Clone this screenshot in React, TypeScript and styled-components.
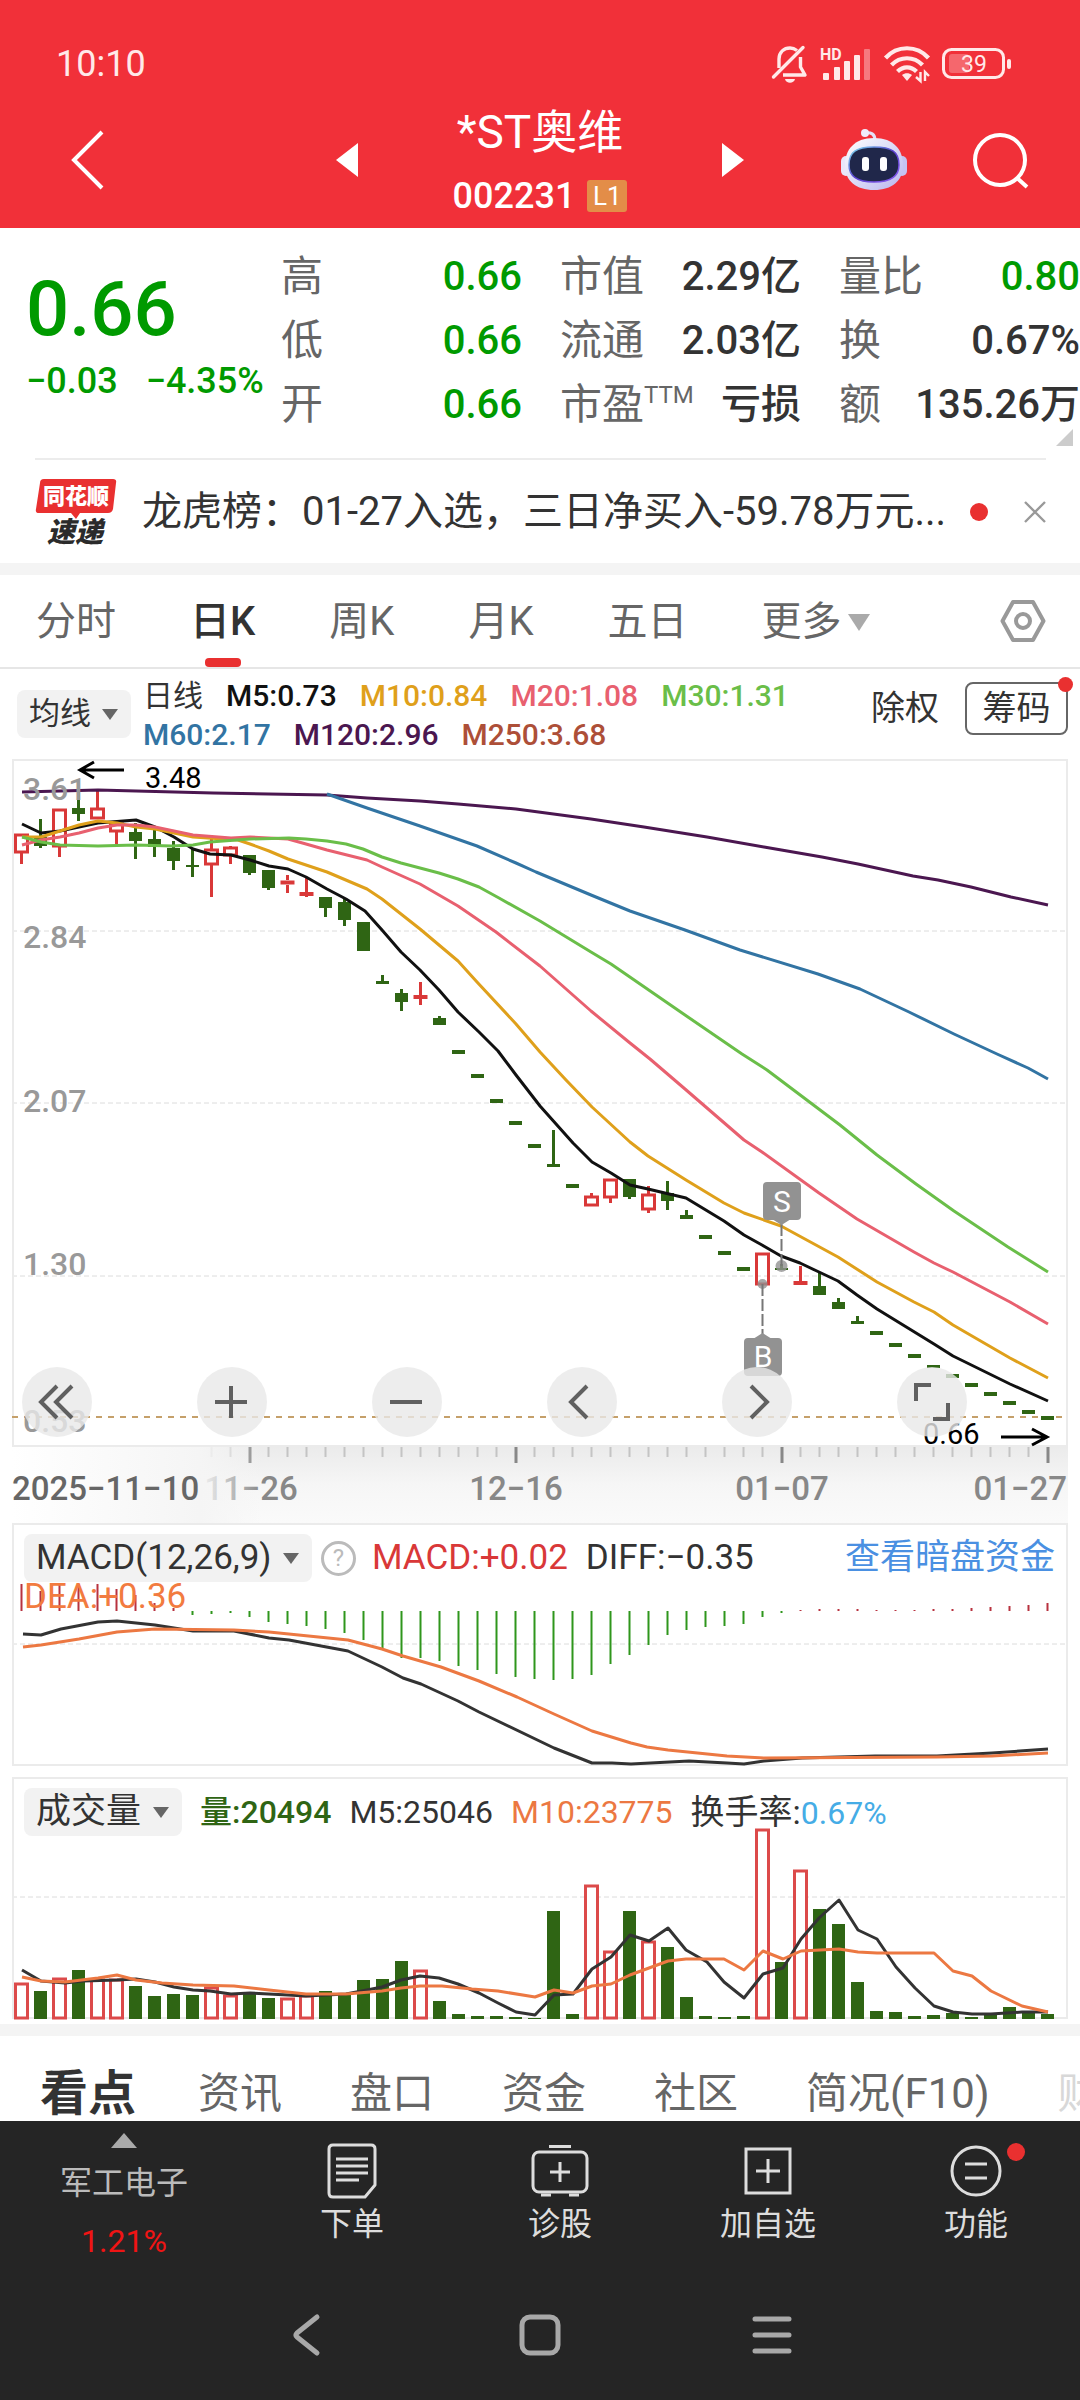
import React from "react";
import styled, { createGlobalStyle, css } from "styled-components";

const FONT = `Roboto, "Noto Sans CJK SC", "Noto Sans", sans-serif`;
const UP = "#d93838";
const DOWN = "#2f6514";

const GlobalStyle = createGlobalStyle`
  * { box-sizing: border-box; }
  html, body { margin: 0; padding: 0; background: #fff; }
  body { font-family: ${FONT}; color: #333; overflow-x: hidden; }
  button, select { font-family: inherit; color: inherit; border: 0; background: none; padding: 0; margin: 0; }
  button { cursor: pointer; }
  svg { display: block; flex: none; overflow: visible; }
  p, h1, dl, dd, dt { margin: 0; font-weight: 400; }
`;

const Page = styled.div`
  display: flex;
  flex-direction: column;
  min-height: 100vh;
`;

/* ---------- header ---------- */

const Header = styled.header`
  background: #f13039;
  color: #fff;
  height: 228px;
  display: flex;
  flex-direction: column;
`;

const StatusBar = styled.div`
  display: flex;
  align-items: center;
  justify-content: space-between;
  height: 100px;
  padding: 28px 68px 0 56px;
  color: #ffe9e9;
`;

const Clock = styled.span`
  font-size: 36px;
  line-height: 40px;
`;

const StatusIcons = styled.div`
  display: flex;
  align-items: center;
  gap: 12px;
`;

const TitleBar = styled.div`
  flex: 1;
  display: grid;
  grid-template-columns: 336px 1fr 336px;
  align-items: center;
`;

const TitleSide = styled.div<{ $end?: boolean }>`
  display: flex;
  align-items: center;
  gap: 64px;
  padding: 0 50px 8px 70px;
  justify-content: ${(p) => (p.$end ? "flex-end" : "flex-start")};
`;

const StockSwitch = styled.div`
  display: flex;
  align-items: center;
  justify-content: space-between;
  padding-bottom: 8px;
`;

const StockTitle = styled.div`
  display: flex;
  flex-direction: column;
  align-items: center;
  gap: 16px;
`;

const StockName = styled.h1`
  font-size: 46px;
  line-height: 56px;
`;

const StockCode = styled.div`
  display: flex;
  align-items: center;
  gap: 12px;
  font-size: 36px;
  font-weight: 500;
  line-height: 40px;
`;

const LevelBadge = styled.span`
  background: #e38d48;
  border-radius: 3px;
  width: 40px;
  font-size: 26px;
  font-weight: 400;
  line-height: 32px;
  text-align: center;
`;

/* ---------- quote ---------- */

const Quote = styled.section`
  position: relative;
  display: grid;
  grid-template-columns: 217px 1fr 1fr 1fr;
  column-gap: 38px;
  height: 230px;
  padding: 17px 0 0 26px;
`;

const PriceBlock = styled.div`
  color: #009a00;
  padding-top: 22px;
  white-space: nowrap;
`;

const Price = styled.p`
  font-size: 76px;
  line-height: 84px;
  font-weight: 500;
`;

const Change = styled.p`
  display: flex;
  gap: 28px;
  font-size: 36px;
  font-weight: 500;
  line-height: 44px;
  padding-top: 8px;
`;

const StatList = styled.dl`
  display: flex;
  flex-direction: column;
`;

const Stat = styled.div`
  display: flex;
  justify-content: space-between;
  align-items: center;
  height: 64px;
  line-height: 64px;
  white-space: nowrap;
`;

const StatLabel = styled.dt`
  color: #666;
  font-size: 42px;
  display: flex;
`;

const Sup = styled.span`
  font-size: 24px;
  line-height: 44px;
`;

const StatValue = styled.dd<{ $down?: boolean }>`
  font-size: 40px;
  font-weight: 500;
  color: ${(p) => (p.$down ? "#009a00" : "#333")};
`;

const Corner = styled.span`
  position: absolute;
  right: 7px;
  bottom: 12px;
  border-left: 17px solid transparent;
  border-bottom: 17px solid #ccc;
`;

const News = styled.section`
  display: flex;
  align-items: center;
  height: 105px;
  margin: 0 34px 0 35px;
  border-top: 2px solid #ececec;
`;

const NewsText = styled.a`
  flex: 1;
  min-width: 0;
  margin-left: 25px;
  color: #333;
  font-size: 40px;
  line-height: 60px;
  text-decoration: none;
  white-space: nowrap;
  overflow: hidden;
`;

const Dot = styled.span<{ $size: number }>`
  flex: none;
  width: ${(p) => p.$size}px;
  height: ${(p) => p.$size}px;
  border-radius: 50%;
  background: #e93030;
`;

const CloseButton = styled.button`
  margin-left: 36px;
`;

const Strip = styled.div`
  height: 12px;
  background: #f4f4f4;
`;

/* ---------- period tabs ---------- */

const PeriodTabs = styled.nav`
  display: flex;
  align-items: stretch;
  gap: 74px;
  height: 94px;
  padding: 0 34px 0 36px;
  border-bottom: 2px solid #e6e6e6;
`;

const PeriodTab = styled.button<{ $active?: boolean }>`
  position: relative;
  display: flex;
  align-items: center;
  gap: 6px;
  padding-top: 2px;
  font-size: 40px;
  line-height: 60px;
  color: #666;
  white-space: nowrap;
  ${(p) =>
    p.$active &&
    css`
      color: #333;
      font-weight: 500;
      &::after {
        content: "";
        position: absolute;
        left: 50%;
        bottom: 0;
        width: 36px;
        height: 9px;
        margin-left: -18px;
        border-radius: 4px;
        background: #e93030;
      }
    `}
`;

const Settings = styled.button`
  margin-left: auto;
`;

const Caret = styled.span<{ $w: number; $h: number; $color: string }>`
  flex: none;
  border: ${(p) => p.$w}px solid transparent;
  border-top: ${(p) => p.$h}px solid ${(p) => p.$color};
  border-bottom: 0;
`;

/* ---------- indicator row ---------- */

const IndicatorBar = styled.div`
  display: flex;
  align-items: center;
  height: 90px;
  padding: 0 12px 0 17px;
`;

const SelectBox = styled.label<{ $size: number }>`
  position: relative;
  display: flex;
  align-items: center;
  flex: none;
  background: #f2f2f2;
  border-radius: 8px;
  font-size: ${(p) => p.$size}px;

  select {
    appearance: none;
    height: 48px;
    line-height: 48px;
    padding: 0 40px 0 12px;
    font-size: inherit;
    color: #333;
    outline: 0;
  }

  ${Caret} {
    position: absolute;
    right: 13px;
    pointer-events: none;
  }
`;

const Averages = styled.div`
  flex: 1;
  display: flex;
  flex-wrap: wrap;
  column-gap: 23px;
  margin-left: 12px;
  padding-top: 2px;
  max-width: 690px;
  font-size: 30px;
  font-weight: 500;
  line-height: 39px;
  white-space: nowrap;
`;

const Tone = styled.span<{ $color: string; $size?: number; $weight?: number }>`
  color: ${(p) => p.$color};
  font-size: ${(p) => (p.$size ? `${p.$size}px` : "inherit")};
  font-weight: ${(p) => p.$weight || "inherit"};
`;

const BarActions = styled.div`
  display: flex;
  align-items: center;
  gap: 26px;
  margin-left: auto;
  padding-bottom: 12px;
  font-size: 34px;
`;

const OutlineButton = styled.button`
  position: relative;
  height: 53px;
  width: 103px;
  border: 2px solid #666;
  border-radius: 8px;
  font-size: 34px;
  line-height: 48px;

  ${Dot} {
    position: absolute;
    top: -7px;
    right: -7px;
  }
`;

const TextButton = styled.button`
  font-size: 34px;
  line-height: 50px;
`;

/* ---------- charts ---------- */

const Charts = styled.main`
  padding: 0 12px;
`;

const Panel = styled.section`
  position: relative;
`;

const ChartSvg = styled.svg`
  width: 100%;
  height: auto;
  font-family: ${FONT};
`;

const ChartTools = styled.div`
  position: absolute;
  left: 10px;
  right: 101px;
  bottom: 10px;
  display: flex;
  justify-content: space-between;
`;

const ToolButton = styled.button`
  display: grid;
  place-items: center;
  width: 70px;
  height: 70px;
  border-radius: 50%;
  background: rgba(232, 232, 232, 0.8);
`;

const PanelHead = styled.div<{ $size: number }>`
  position: absolute;
  top: 11px;
  left: 12px;
  right: 13px;
  display: flex;
  align-items: center;
  gap: 18px;
  height: 48px;
  font-size: ${(p) => p.$size}px;
  line-height: 48px;
  white-space: nowrap;
`;

const HelpMark = styled.button`
  width: 35px;
  height: 35px;
  margin: 0 -2px 0 -9px;
  border: 3px solid #bbb;
  border-radius: 50%;
  color: #bbb;
  font-size: 24px;
  line-height: 29px;
`;

const PanelLink = styled.a`
  margin-left: auto;
  color: #4a90e2;
  text-decoration: none;
`;

const DeaLabel = styled.span`
  position: absolute;
  top: 54px;
  left: 12px;
  color: #f27b40;
  font-size: 35px;
  line-height: 40px;
`;

const VolumePanel = styled(Panel)`
  margin: 11px 0 5px;
`;

/* ---------- info tabs and bottom bars ---------- */

const InfoTabs = styled.nav`
  display: flex;
  align-items: center;
  gap: 68px;
  height: 85px;
  padding: 31px 0 0 40px;
  overflow: hidden;
`;

const InfoTab = styled.button<{ $active?: boolean; $faded?: boolean }>`
  flex: none;
  margin-right: ${(p) => (p.$active ? -6 : 0)}px;
  font-size: ${(p) => (p.$active ? 48 : 42)}px;
  font-weight: ${(p) => (p.$active ? 700 : 400)};
  line-height: 54px;
  color: ${(p) => (p.$active ? "#333" : p.$faded ? "#d8d8d8" : "#666")};
`;

const Dock = styled.footer`
  flex: 1;
  display: flex;
  flex-direction: column;
  background: #252525;
  color: #ddd;
`;

const DockRow = styled.div`
  display: grid;
  grid-template-columns: 248px repeat(4, 1fr);
  height: 150px;
`;

const SectorButton = styled.button`
  display: flex;
  flex-direction: column;
  align-items: center;
  padding-top: 12px;
  color: #bbb;
  font-size: 32px;
  line-height: 48px;
`;

const SectorName = styled.span`
  margin: 11px 0 10px;
`;

const DockButton = styled.button`
  display: flex;
  flex-direction: column;
  align-items: center;
  padding-top: 20px;
  font-size: 32px;
  line-height: 46px;
`;

const IconSlot = styled.span`
  position: relative;
  display: grid;
  place-items: center;
  width: 62px;
  height: 60px;

  ${Dot} {
    position: absolute;
    top: 2px;
    right: -18px;
  }
`;

const SystemNav = styled.div`
  display: flex;
  align-items: center;
  justify-content: space-between;
  height: 129px;
  padding: 0 287px 1px 286px;
`;

/* ---------- data ---------- */

type Candle = [up: number, high: number, top: number, bottom: number, low: number];

const candles: Candle[] = [
  [1, 75, 75, 93, 105], [0, 60, 78, 87, 89], [1, 50, 50, 87, 98], [0, 31, 49, 55, 62],
  [1, 31, 49, 59, 60], [1, 64, 64, 72, 85], [0, 64, 73, 82, 100], [0, 71, 80, 88, 98],
  [0, 82, 89, 102, 111], [0, 89, 106, 108, 118], [1, 80, 90, 105, 138], [1, 87, 88, 96, 105],
  [0, 96, 96, 114, 116], [0, 111, 111, 129, 131], [1, 116, 121, 126, 134], [1, 119, 133, 137, 138],
  [0, 138, 138, 149, 158], [0, 140, 143, 161, 167], [0, 163, 163, 192, 192], [0, 216, 222, 225, 225],
  [0, 230, 234, 243, 252], [1, 223, 236, 240, 246], [0, 257, 259, 266, 266], [0, 291, 291, 295, 295],
  [0, 315, 315, 319, 319], [0, 340, 340, 344, 344], [0, 362, 362, 366, 366], [0, 385, 385, 389, 389],
  [0, 371, 405, 408, 408], [0, 425, 425, 429, 429], [1, 434, 437, 446, 446], [1, 420, 420, 438, 444],
  [0, 420, 420, 438, 440], [1, 427, 435, 450, 454], [0, 422, 434, 442, 451], [0, 451, 456, 460, 460],
  [0, 476, 476, 480, 480], [0, 492, 492, 496, 496], [0, 508, 508, 512, 512], [1, 494, 494, 525, 525],
  [0, 505, 509, 511, 511], [1, 507, 522, 526, 526], [0, 514, 527, 536, 536], [0, 539, 543, 550, 550],
  [0, 557, 562, 565, 565], [0, 572, 572, 576, 576], [0, 584, 584, 588, 588], [0, 595, 595, 599, 599],
  [0, 606, 606, 609, 609], [0, 615, 615, 619, 619], [0, 624, 624, 628, 628], [0, 633, 633, 637, 637],
  [0, 642, 642, 646, 646], [0, 651, 651, 655, 655], [0, 657, 657, 661, 661],
];

const averageLines: [color: string, points: string][] = [
  ["#4b1750", "22,33 98,31 213,34 327,36 367,39 420,42 458,45 516,50 591,60 644,68 707,78 764,88 822,98 858,105 913,117 938,121 971,128 1011,138 1048,146"],
  ["#3274a3", "327,35 367,49 420,67 477,87 516,104 536,113 591,136 630,152 685,171 740,191 818,215 860,230 909,253 954,275 997,295 1028,309 1048,320"],
  ["#111", "22,65 41,74 60,72 98,64 136,61 155,68 174,78 193,90 210,95 231,96 250,101 269,107 288,110 306,118 327,130 346,140 365,152 382,171 401,193 420,211 439,231 458,253 479,273 498,292 516,316 540,347 573,384 592,403 611,414 630,426 648,430 686,439 724,462 744,476 762,486 781,497 800,504 819,513 838,522 857,536 877,550 934,585 953,597 1010,625 1048,642"],
  ["#dfa01b", "22,78 41,78 60,72 79,66 98,62 117,64 136,68 155,70 193,78 238,81 250,85 269,92 288,100 306,106 327,113 367,130 382,140 420,170 458,202 477,223 516,265 540,293 566,321 592,348 630,383 648,397 686,421 724,444 744,454 781,467 838,498 877,523 914,543 934,553 953,566 1010,599 1048,619"],
  ["#e8606f", "22,86 41,81 60,78 79,74 98,69 117,66 136,66 155,68 193,76 231,79 250,78 288,80 306,85 327,91 367,101 382,108 420,125 458,147 496,173 540,207 591,252 630,284 650,300 685,330 744,381 762,393 819,434 857,460 914,493 934,504 953,513 1010,543 1048,565"],
  ["#6abe49", "22,78 41,83 60,86 98,87 136,86 172,87 193,86 210,83 250,80 289,79 306,80 327,82 346,85 363,90 382,98 401,104 439,114 458,120 479,128 499,139 540,162 591,193 611,205 685,256 742,295 767,311 840,366 877,396 916,425 954,452 1008,488 1048,513"],
];

const macdBars = [
  27, 20, 26, 27, 27, 22, 16, 8, 3, -4, -3, -2, -6, -11, -13, -15, -18, -22, -29, -37, -47, -47, -50, -55, -59,
  -63, -66, -68, -69, -68, -64, -53, -44, -34, -24, -19, -16, -15, -13, -6, -2, 1, 2, 2, 2, 1, 1, 1, 2, 2, 3, 4,
  5, 6, 8,
];
const diffLine =
  "23,111 41,112 61,106 98,99 117,98 155,102 193,108 234,108 269,115 289,117 348,128 382,144 403,155 421,161 458,178 479,189 554,225 592,240 612,240 631,241 689,238 727,240 744,241 764,238 802,235 875,233 937,233 992,230 1048,226";
const deaLine =
  "23,124 41,122 79,116 117,109 155,106 234,107 269,109 348,117 382,126 403,133 441,144 479,158 517,174 554,191 592,208 631,220 647,224 668,227 727,233 764,235 937,234 992,233 1048,230";

const volumes = [
  34, 28, 39, 49, 38, 38, 33, 23, 25, 24, 30, 22, 25, 21, 19, 22, 28, 26, 39, 40, 58, 47, 18, 5, 3, 3, 2, 1, 108,
  5, 132, 66, 108, 76, 72, 22, 3, 2, 3, 188, 57, 147, 110, 95, 37, 8, 7, 3, 4, 6, 2, 4, 12, 7, 5,
];
const volume5 =
  "22,193 41,204 65,206 83,204 117,203 136,202 155,205 174,210 193,213 210,214 231,217 250,216 288,218 306,219 346,217 367,213 382,210 401,203 420,199 439,201 458,207 479,216 498,226 516,235 535,238 554,218 573,217 592,192 611,180 630,158 649,164 668,151 686,173 707,185 724,205 744,221 763,197 783,191 801,162 819,141 839,123 858,153 877,162 896,190 915,211 934,229 953,235 972,237 991,237 1022,235 1048,235";
const volume10 =
  "22,200 41,204 65,205 98,201 117,198 136,203 162,206 193,208 234,209 269,213 306,217 346,217 382,214 401,211 420,209 442,209 472,212 498,214 535,220 554,213 573,216 592,209 611,207 630,198 668,184 686,182 724,182 744,193 763,174 783,182 801,174 839,172 858,175 877,176 934,176 953,194 972,199 991,214 1022,229 1048,235";

const xOf = (i: number) => 22 + i * 19 - 0.5;

/* ---------- chart drawings ---------- */

function Frame({ height }: { height: number }) {
  return <rect x="13" y="1" width="1054" height={height - 2} fill="none" stroke="#ebebeb" strokeWidth="2" />;
}

function GridLine({ y }: { y: number }) {
  return <line x1="12" x2="1067" y1={y} y2={y} stroke="#dcdcdc" strokeDasharray="5 3" />;
}

function Line({ color, points }: { color: string; points: string }) {
  return <polyline points={points} fill="none" stroke={color} strokeWidth="3" strokeLinejoin="round" />;
}

function CandleMark({ candle, x }: { candle: Candle; x: number }) {
  const [up, high, top, bottom, low] = candle;
  if (!up) {
    return (
      <g fill={DOWN}>
        <rect x={x - 1.5} y={high} width="3" height={low - high} />
        <rect x={x - 6.5} y={top} width="13" height={bottom - top} />
      </g>
    );
  }
  return (
    <g stroke={UP} strokeWidth="3">
      <path d={`M${x} ${high}V${top}M${x} ${bottom}V${low}`} />
      {bottom - top > 6 ? (
        <rect x={x - 6} y={top + 1} width="12" height={bottom - top - 1} fill="none" />
      ) : (
        <path d={`M${x - 7} ${(top + bottom) / 2}H${x + 7}`} strokeWidth="4" />
      )}
    </g>
  );
}

function PriceChart() {
  return (
    <ChartSvg viewBox="12 0 1056 688" role="img" aria-label="日K">
      {[172, 344, 517].map((y) => (
        <GridLine key={y} y={y} />
      ))}
      <Frame height={688} />
      <line x1="12" x2="1065" y1="658" y2="658" stroke="#c5a06a" strokeWidth="2" strokeDasharray="6 6" />
      {candles.map((c, i) => (
        <CandleMark key={i} candle={c} x={xOf(i)} />
      ))}
      {averageLines.map(([color, points]) => (
        <Line key={color} color={color} points={points} />
      ))}
      <g fill="#999" fontSize="32" fontWeight="500">
        <text x="23" y="41">3.61</text>
        <text x="23" y="189">2.84</text>
        <text x="23" y="353">2.07</text>
        <text x="23" y="516">1.30</text>
        <text x="23" y="673">0.53</text>
      </g>
      <g fill="#000" fontSize="29">
        <text x="145" y="29">3.48</text>
        <text x="923" y="685">0.66</text>
      </g>
      <g fill="none" stroke="#000" strokeWidth="3">
        <path d="M124 11H80M94 3L80 11L94 19" />
        <path d="M1001 678H1046M1032 670L1047 678L1032 686" />
      </g>
      <g fill="#929292">
        <circle cx="781.5" cy="507" r="6" opacity="0.8" />
        <circle cx="762.5" cy="525" r="5" opacity="0.8" />
        <path d="M781.5 465V508M762.5 525V575" stroke="#777" strokeWidth="2" strokeDasharray="12 3" />
        <rect x="763" y="423" width="38" height="38" rx="4" />
        <path d="M772 460H791L781.5 466ZM753 580H772L762.5 574Z" />
        <rect x="744" y="579" width="38" height="38" rx="4" />
      </g>
      <g fill="#fff" fontSize="30" textAnchor="middle">
        <text x="782" y="453">S</text>
        <text x="763" y="608">B</text>
      </g>
    </ChartSvg>
  );
}

function TimeAxis() {
  return (
    <ChartSvg viewBox="12 0 1056 76">
      <defs>
        <linearGradient id="axisShade" x2="0" y2="1">
          <stop offset="0" stopColor="#ebebeb" />
          <stop offset="0.5" stopColor="#f6f6f6" />
          <stop offset="1" stopColor="#fafafa" />
        </linearGradient>
        <linearGradient id="axisFade">
          <stop offset="0" stopColor="#fff" />
          <stop offset="0.75" stopColor="#f5f5f5" />
          <stop offset="1" stopColor="#f5f5f5" stopOpacity="0" />
        </linearGradient>
      </defs>
      <rect x="12" width="1056" height="76" fill="url(#axisShade)" />
      {candles.map((_, i) => {
        if (i < 10) return null;
        const major = (i - 12) % 14 === 0;
        return (
          <rect
            key={i}
            x={xOf(i) - 1}
            y="0"
            width={major ? 3 : 2}
            height={major ? 16 : 10}
            fill={major ? "#888" : "#c4c4c4"}
          />
        );
      })}
      <g fill="#888" fontSize="33" fontWeight="500">
        <text x="251" y="53" textAnchor="middle">11−26</text>
        <text x="516" y="53" textAnchor="middle">12−16</text>
        <text x="782" y="53" textAnchor="middle">01−07</text>
        <text x="1067" y="53" textAnchor="end">01−27</text>
      </g>
      <rect x="12" width="250" height="76" fill="url(#axisFade)" />
      <text x="12" y="53" fill="#666" fontSize="33" fontWeight="500">2025−11−10</text>
    </ChartSvg>
  );
}

function MacdChart() {
  return (
    <ChartSvg viewBox="12 0 1056 243" role="img" aria-label="MACD">
      <GridLine y={121} />
      <Frame height={243} />
      {macdBars.map((v, i) => (
        <rect
          key={i}
          x={xOf(i) - 1}
          y={v > 0 ? 88 - v : 88}
          width="2"
          height={Math.abs(v)}
          fill={v > 0 ? "#b8323f" : "#2f961c"}
        />
      ))}
      <Line color="#333" points={diffLine} />
      <Line color="#ec7842" points={deaLine} />
    </ChartSvg>
  );
}

function VolumeChart() {
  return (
    <ChartSvg viewBox="12 0 1056 242" role="img" aria-label="成交量">
      <GridLine y={120} />
      <Frame height={242} />
      {volumes.map((v, i) =>
        candles[i][0] ? (
          <rect key={i} x={xOf(i) - 6} y={241 - v} width="12" height={v} fill="#fff" stroke="#dc4a4a" strokeWidth="3" />
        ) : (
          <rect key={i} x={xOf(i) - 6.5} y={242 - v} width="13" height={v} fill={DOWN} />
        )
      )}
      <Line color="#333" points={volume5} />
      <Line color="#ec7842" points={volume10} />
    </ChartSvg>
  );
}

/* ---------- icons ---------- */

const BellOff = () => (
  <svg width="36" height="38" viewBox="0 0 36 38" fill="none" stroke="currentColor" strokeWidth="3.4">
    <path d="M7 23V14C7 7 12 3 18 3C21 3 23 4 25 5.500M28.500 12V22L33 30H11" strokeLinejoin="round" />
    <path d="M1.500 32L31 2.500" strokeLinecap="round" />
    <path d="M13 34H23C22 39 14 39 13 34Z" fill="currentColor" stroke="none" />
  </svg>
);

const Signal = () => (
  <svg width="52" height="36" viewBox="0 0 52 36" fill="currentColor">
    <text x="0" y="14" fontSize="16" fontWeight="700">HD</text>
    <rect x="3" y="27" width="6" height="7" rx="1" />
    <rect x="14" y="21" width="6" height="13" rx="1" />
    <rect x="24" y="15" width="6" height="19" rx="1" />
    <rect x="34" y="9" width="6" height="25" rx="1" />
    <rect x="44" y="3" width="6" height="31" rx="1" opacity="0.4" />
  </svg>
);

const Wifi = () => (
  <svg width="46" height="36" viewBox="0 0 46 36" fill="none" stroke="currentColor" strokeWidth="4.200">
    <path d="M1.500 12C13 -1 33 -1 44.500 12" />
    <path d="M7.500 19C16 10 30 10 38.500 19" />
    <path d="M13.500 25.500C19 20 27 20 32.500 25.500" />
    <path d="M18 29C21 26.500 25 26.500 28 29L23 35Z" fill="currentColor" stroke="none" />
    <path d="M36.500 26V35L32 31M41 35V26L45 30" strokeWidth="2.400" />
  </svg>
);

const Battery = () => (
  <svg width="70" height="32" viewBox="0 0 70 32" fill="none">
    <rect x="1.500" y="1.500" width="60" height="28" rx="8" stroke="currentColor" strokeWidth="3" />
    <rect x="7" y="6" width="20" height="19" rx="3" fill="currentColor" opacity="0.3" />
    <rect x="65" y="11" width="4" height="10" rx="2" fill="currentColor" />
    <text x="32" y="24" fontSize="23" textAnchor="middle" fill="currentColor">39</text>
  </svg>
);

const Robot = () => (
  <svg width="68" height="64" viewBox="0 0 68 64">
    <defs>
      <linearGradient id="shell" x2="1" y2="1">
        <stop offset="0" stopColor="#fff" />
        <stop offset="1" stopColor="#b9b6ee" />
      </linearGradient>
      <linearGradient id="rim" x2="1" y2="1">
        <stop offset="0" stopColor="#7fe3f0" />
        <stop offset="0.5" stopColor="#5a3fd0" />
        <stop offset="1" stopColor="#8a5cf0" />
      </linearGradient>
    </defs>
    <path d="M25 5C31 4 35 6 35 12" fill="none" stroke="#e4e0f8" strokeWidth="3" />
    <circle cx="25" cy="5" r="4" fill="#f0ecfb" />
    <rect x="1" y="28" width="10" height="20" rx="5" fill="#e9e6fa" />
    <rect x="57" y="28" width="10" height="20" rx="5" fill="#c5c3f2" />
    <path d="M34 10C54 10 63 22 63 37C63 53 52 62 34 62C16 62 5 53 5 37C5 22 14 10 34 10Z" fill="url(#shell)" />
    <path d="M34 19C52 19 59 24 59 37C59 49 50 54 34 54C18 54 9 49 9 37C9 24 16 19 34 19Z" fill="#20274a" stroke="url(#rim)" strokeWidth="1.500" />
    <rect x="22" y="29" width="7" height="14" rx="3" fill="#fff" />
    <rect x="40" y="29" width="7" height="14" rx="3" fill="#fff" />
  </svg>
);

const BackIcon = () => (
  <svg width="36" height="60" viewBox="0 0 36 60" fill="none" stroke="#fff" strokeWidth="4">
    <path d="M32 2L4 30L32 58" />
  </svg>
);

const SearchIcon = () => (
  <svg width="58" height="58" viewBox="0 0 58 58" fill="none" stroke="#fff" strokeWidth="4">
    <circle cx="28" cy="29" r="25" />
    <path d="M45 47L55 56" />
  </svg>
);

const PrevIcon = () => (
  <svg width="22" height="34" viewBox="0 0 22 34" fill="#fff">
    <path d="M0 17L22 0V34Z" />
  </svg>
);

const NextIcon = () => (
  <svg width="22" height="34" viewBox="0 0 22 34" fill="#fff">
    <path d="M22 17L0 0V34Z" />
  </svg>
);

const ExpressLogo = () => (
  <svg width="82" height="70" viewBox="0 0 82 70" fontWeight="900" textAnchor="middle">
    <path d="M9 2H78Q82 2 81 6L78 32Q77 36 73 36H45L41 42L36 36H4Q0 36 1 32L5 6Q5 2 9 2Z" fill="#e93030" />
    <text x="41" y="27" fontSize="22" fill="#fff">同花顺</text>
    <text x="40" y="65" fontSize="28" fontStyle="italic" fill="#2b2b2b">速递</text>
  </svg>
);

const CloseIcon = () => (
  <svg width="22" height="22" viewBox="0 0 22 22" stroke="#999" strokeWidth="2.400">
    <path d="M1 1L21 21M21 1L1 21" />
  </svg>
);

const HexIcon = () => (
  <svg width="46" height="44" viewBox="0 0 46 44" fill="none" stroke="#999" strokeWidth="4">
    <path d="M13 3H33L43.500 22L33 41H13L2.500 22Z" strokeLinejoin="round" />
    <circle cx="23" cy="22" r="7" />
  </svg>
);

const toolIcons: [label: string, path: string][] = [
  ["更早", "M18 1L2 17L18 33M33 1L17 17L33 33"],
  ["放大", "M17 1V33M1 17H33"],
  ["缩小", "M1 17H33"],
  ["左移", "M23 1L7 17L23 33"],
  ["右移", "M12 1L28 17L12 33"],
  ["全屏", "M2 16V0H17M34 18V34H19"],
];

const OrderIcon = () => (
  <svg width="50" height="56" viewBox="0 0 50 56" fill="none" stroke="#ddd" strokeWidth="3">
    <path d="M6 2H44Q48 2 48 6V42L38 54H6Q2 54 2 50V6Q2 2 6 2Z" strokeLinejoin="round" />
    <path d="M9 16H41M9 23H41M9 30H41M9 37H32" />
  </svg>
);

const DiagnoseIcon = () => (
  <svg width="58" height="54" viewBox="0 0 58 54" fill="none" stroke="#ddd" strokeWidth="3">
    <path d="M18 2.500H40" />
    <rect x="2" y="8" width="54" height="40" rx="6" />
    <path d="M29 18V38M19 28H39M10 51H20M38 51H48" />
  </svg>
);

const AddIcon = () => (
  <svg width="48" height="48" viewBox="0 0 48 48" fill="none" stroke="#ddd" strokeWidth="3">
    <rect x="2" y="2" width="44" height="44" />
    <path d="M24 12V36M12 24H36" />
  </svg>
);

const FunctionIcon = () => (
  <svg width="52" height="52" viewBox="0 0 52 52" fill="none" stroke="#ddd" strokeWidth="3">
    <circle cx="26" cy="26" r="24" />
    <path d="M15 19H37M15 33H37" />
  </svg>
);

/* ---------- page ---------- */

const stats: { label: string; sup?: string; value: string; down?: boolean }[][] = [
  [
    { label: "高", value: "0.66", down: true },
    { label: "低", value: "0.66", down: true },
    { label: "开", value: "0.66", down: true },
  ],
  [
    { label: "市值", value: "2.29亿" },
    { label: "流通", value: "2.03亿" },
    { label: "市盈", sup: "TTM", value: "亏损" },
  ],
  [
    { label: "量比", value: "0.80", down: true },
    { label: "换", value: "0.67%" },
    { label: "额", value: "135.26万" },
  ],
];

const averages: [string, string][] = [
  ["M5:0.73", "#111"],
  ["M10:0.84", "#dfa01b"],
  ["M20:1.08", "#e8606f"],
  ["M30:1.31", "#6abe49"],
  ["M60:2.17", "#3274a3"],
  ["M120:2.96", "#4b1750"],
  ["M250:3.68", "#ad4f38"],
];

function Picker({ name, value, size }: { name: string; value: string; size: number }) {
  return (
    <SelectBox $size={size}>
      <select aria-label={name} defaultValue={value}>
        <option>{value}</option>
      </select>
      <Caret $w={8} $h={11} $color="#666" />
    </SelectBox>
  );
}

export default function App() {
  return (
    <Page lang="zh-CN">
      <GlobalStyle />
      <Header>
        <StatusBar>
          <Clock>10:10</Clock>
          <StatusIcons>
            <BellOff />
            <Signal />
            <Wifi />
            <Battery />
          </StatusIcons>
        </StatusBar>
        <TitleBar>
          <TitleSide>
            <button aria-label="返回"><BackIcon /></button>
          </TitleSide>
          <StockSwitch>
            <button aria-label="上一只"><PrevIcon /></button>
            <StockTitle>
              <StockName>*ST奥维</StockName>
              <StockCode>
                002231<LevelBadge>L1</LevelBadge>
              </StockCode>
            </StockTitle>
            <button aria-label="下一只"><NextIcon /></button>
          </StockSwitch>
          <TitleSide $end>
            <button aria-label="助手"><Robot /></button>
            <button aria-label="搜索"><SearchIcon /></button>
          </TitleSide>
        </TitleBar>
      </Header>

      <Quote>
        <PriceBlock>
          <Price>0.66</Price>
          <Change>
            <span>−0.03</span>
            <span>−4.35%</span>
          </Change>
        </PriceBlock>
        {stats.map((column, i) => (
          <StatList key={i}>
            {column.map((s) => (
              <Stat key={s.label}>
                <StatLabel>
                  {s.label}
                  {s.sup && <Sup>{s.sup}</Sup>}
                </StatLabel>
                <StatValue $down={s.down}>{s.value}</StatValue>
              </Stat>
            ))}
          </StatList>
        ))}
        <Corner />
      </Quote>

      <News>
        <ExpressLogo />
        <NewsText href="#news">龙虎榜：01-27入选，三日净买入-59.78万元...</NewsText>
        <Dot $size={18} />
        <CloseButton aria-label="关闭"><CloseIcon /></CloseButton>
      </News>
      <Strip />

      <PeriodTabs>
        <PeriodTab>分时</PeriodTab>
        <PeriodTab $active>日K</PeriodTab>
        <PeriodTab>周K</PeriodTab>
        <PeriodTab>月K</PeriodTab>
        <PeriodTab>五日</PeriodTab>
        <PeriodTab>
          更多
          <Caret $w={11} $h={17} $color="#aaa" />
        </PeriodTab>
        <Settings aria-label="设置"><HexIcon /></Settings>
      </PeriodTabs>

      <IndicatorBar>
        <Picker name="主图指标" value="均线" size={31} />
        <Averages>
          <Tone $color="#333" $weight={400}>日线</Tone>
          {averages.map(([text, color]) => (
            <Tone key={text} $color={color}>{text}</Tone>
          ))}
        </Averages>
        <BarActions>
          <TextButton>除权</TextButton>
          <OutlineButton>
            筹码
            <Dot $size={15} />
          </OutlineButton>
        </BarActions>
      </IndicatorBar>

      <Charts>
        <Panel>
          <PriceChart />
          <ChartTools>
            {toolIcons.map(([label, path]) => (
              <ToolButton key={label} aria-label={label}>
                <svg width="36" height="36" viewBox="0 -1 36 36" fill="none" stroke="#606060" strokeWidth="4">
                  <path d={path} />
                </svg>
              </ToolButton>
            ))}
          </ChartTools>
        </Panel>
        <TimeAxis />
        <Panel>
          <MacdChart />
          <PanelHead $size={35}>
            <Picker name="副图指标" value="MACD(12,26,9)" size={35} />
            <HelpMark aria-label="说明">?</HelpMark>
            <Tone $color={UP}>MACD:+0.02</Tone>
            <Tone $color="#333">DIFF:−0.35</Tone>
            <PanelLink href="#funds">查看暗盘资金</PanelLink>
          </PanelHead>
          <DeaLabel>DEA:+0.36</DeaLabel>
        </Panel>
        <VolumePanel>
          <VolumeChart />
          <PanelHead $size={32}>
            <Picker name="成交指标" value="成交量" size={35} />
            <Tone $color={DOWN} $weight={500}>量:20494</Tone>
            <Tone $color="#333">M5:25046</Tone>
            <Tone $color="#ec7842">M10:23775</Tone>
            <span>
              <Tone $color="#333" $size={34}>换手率:</Tone>
              <Tone $color="#45ace6">0.67%</Tone>
            </span>
          </PanelHead>
        </VolumePanel>
      </Charts>
      <Strip />

      <InfoTabs>
        <InfoTab $active>看点</InfoTab>
        <InfoTab>资讯</InfoTab>
        <InfoTab>盘口</InfoTab>
        <InfoTab>资金</InfoTab>
        <InfoTab>社区</InfoTab>
        <InfoTab>简况(F10)</InfoTab>
        <InfoTab $faded>财务</InfoTab>
      </InfoTabs>

      <Dock>
        <DockRow>
          <SectorButton>
            <svg width="26" height="15" viewBox="0 0 26 15" fill="#aaa">
              <path d="M13 0L26 15H0Z" />
            </svg>
            <SectorName>军工电子</SectorName>
            <Tone $color="#f01414">1.21%</Tone>
          </SectorButton>
          <DockButton>
            <IconSlot><OrderIcon /></IconSlot>
            下单
          </DockButton>
          <DockButton>
            <IconSlot><DiagnoseIcon /></IconSlot>
            诊股
          </DockButton>
          <DockButton>
            <IconSlot><AddIcon /></IconSlot>
            加自选
          </DockButton>
          <DockButton>
            <IconSlot>
              <FunctionIcon />
              <Dot $size={18} />
            </IconSlot>
            功能
          </DockButton>
        </DockRow>
        <SystemNav>
          <button aria-label="系统返回">
            <svg width="42" height="44" viewBox="0 0 42 44" fill="none" stroke="#a8a8a8" strokeWidth="5" strokeLinecap="round" strokeLinejoin="round">
              <path d="M31 4L11 20Q9 22 11 24L31 40" />
            </svg>
          </button>
          <button aria-label="主屏幕">
            <svg width="42" height="42" viewBox="0 0 42 42" fill="none" stroke="#a8a8a8" strokeWidth="5">
              <rect x="3" y="3" width="36" height="36" rx="8" />
            </svg>
          </button>
          <button aria-label="最近任务">
            <svg width="42" height="40" viewBox="0 0 42 40" stroke="#a8a8a8" strokeWidth="5" strokeLinecap="round">
              <path d="M4 4H38M4 20H38M4 36H38" />
            </svg>
          </button>
        </SystemNav>
      </Dock>
    </Page>
  );
}
